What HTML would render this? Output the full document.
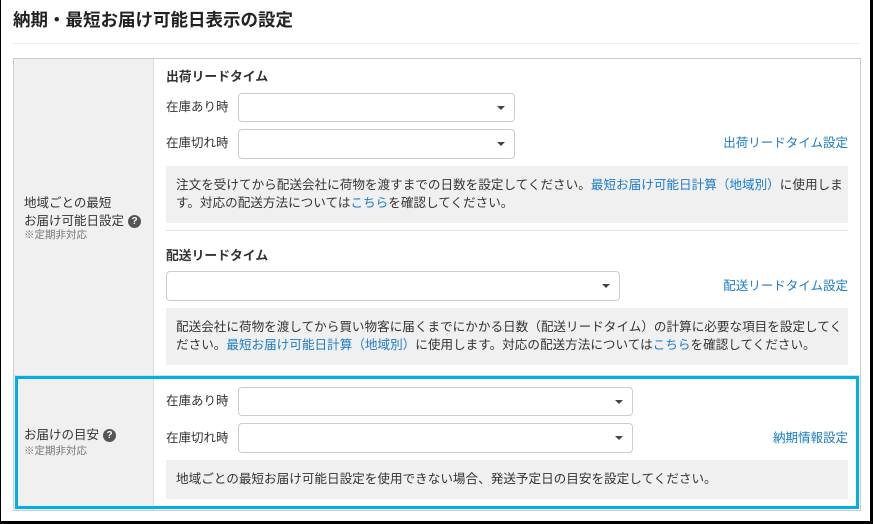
<!DOCTYPE html>
<html><head><meta charset="utf-8"><style>
*{margin:0;padding:0;box-sizing:border-box}
body{width:873px;height:524px;background:#fff;position:relative;overflow:hidden;font-family:"Liberation Sans","Noto Sans CJK JP",sans-serif;color:#333;font-size:12.5px}
.a{position:absolute;white-space:nowrap;line-height:1}
.sel{position:absolute;background:#fff;border:1px solid #ccc;border-radius:4px}
.sel:after{content:"";position:absolute;right:9px;top:50%;margin-top:-2px;border-left:4px solid transparent;border-right:4px solid transparent;border-top:4px solid #444}
.box{position:absolute;background:#f0f0f0;line-height:18px;padding:10px 0 0 10px;font-size:12.6px}
.lk{color:#1a7cc9}
.q{display:inline-block;width:13px;height:13px;border-radius:50%;background:#555;color:#fff;font-size:10px;font-weight:bold;text-align:center;line-height:13px;vertical-align:1px;margin-left:4px}
.sm{color:#777;font-size:10.5px}
</style></head><body>
<div style="position:absolute;left:0;top:0;width:873px;height:524px;border-left:1px solid #000;border-right:3px solid #000;border-bottom:3px solid #000"></div>
<div class="a" style="left:13px;top:12px;font-size:17.5px;font-weight:bold;color:#222">納期・最短お届け可能日表示の設定</div>
<div style="position:absolute;left:13px;top:43px;width:847px;height:1px;background:#eee"></div>
<div style="position:absolute;left:13px;top:58px;width:848px;height:453px;border:1px solid #ccc"></div>
<div style="position:absolute;left:14px;top:59px;width:140px;height:451px;background:#f0f0f0;border-right:1px solid #ddd"></div>
<div style="position:absolute;left:14px;top:375px;width:846px;height:1px;background:#ddd"></div>

<div class="a" style="left:166px;top:71px;font-weight:bold;font-size:12.8px">出荷リードタイム</div>
<div class="a" style="left:166px;top:101px">在庫あり時</div>
<div class="sel" style="left:238px;top:93px;width:277px;height:29px"></div>
<div class="a" style="left:166px;top:137px">在庫切れ時</div>
<div class="sel" style="left:238px;top:129px;width:277px;height:30px"></div>
<div class="a lk" style="right:25px;top:137px">出荷リードタイム設定</div>
<div class="box" style="left:166px;top:166px;width:682px;height:57px">注文を受けてから配送会社に荷物を渡すまでの日数を設定してください。<span class="lk">最短お届け可能日計算（地域別）</span>に使用しま<br>す。対応の配送方法については<span class="lk">こちら</span>を確認してください。</div>
<div style="position:absolute;left:166px;top:230px;width:682px;height:1px;background:#e2e2e2"></div>

<div class="a" style="left:166px;top:250px;font-weight:bold;font-size:12.8px">配送リードタイム</div>
<div class="sel" style="left:166px;top:271px;width:454px;height:30px"></div>
<div class="a lk" style="right:25px;top:280px">配送リードタイム設定</div>
<div class="box" style="left:166px;top:308px;width:682px;height:57px">配送会社に荷物を渡してから買い物客に届くまでにかかる日数（配送リードタイム）の計算に必要な項目を設定してく<br>ださい。<span class="lk">最短お届け可能日計算（地域別）</span>に使用します。対応の配送方法については<span class="lk">こちら</span>を確認してください。</div>

<div class="a" style="left:24px;top:194px;line-height:18px">地域ごとの最短<br>お届け可能日設定<span class="q">?</span></div>
<div class="a sm" style="left:24px;top:230px">※定期非対応</div>

<div style="position:absolute;left:15px;top:376px;width:844px;height:133px;border:3px solid #00aee8"></div>
<div class="a" style="left:166px;top:395px">在庫あり時</div>
<div class="sel" style="left:238px;top:387px;width:395px;height:29px"></div>
<div class="a" style="left:166px;top:432px">在庫切れ時</div>
<div class="sel" style="left:238px;top:423px;width:395px;height:30px"></div>
<div class="a lk" style="right:25px;top:432px">納期情報設定</div>
<div class="box" style="left:166px;top:460px;width:682px;height:39px">地域ごとの最短お届け可能日設定を使用できない場合、発送予定日の目安を設定してください。</div>
<div class="a" style="left:24px;top:429px">お届けの目安<span class="q">?</span></div>
<div class="a sm" style="left:24px;top:446px">※定期非対応</div>
</body></html>
